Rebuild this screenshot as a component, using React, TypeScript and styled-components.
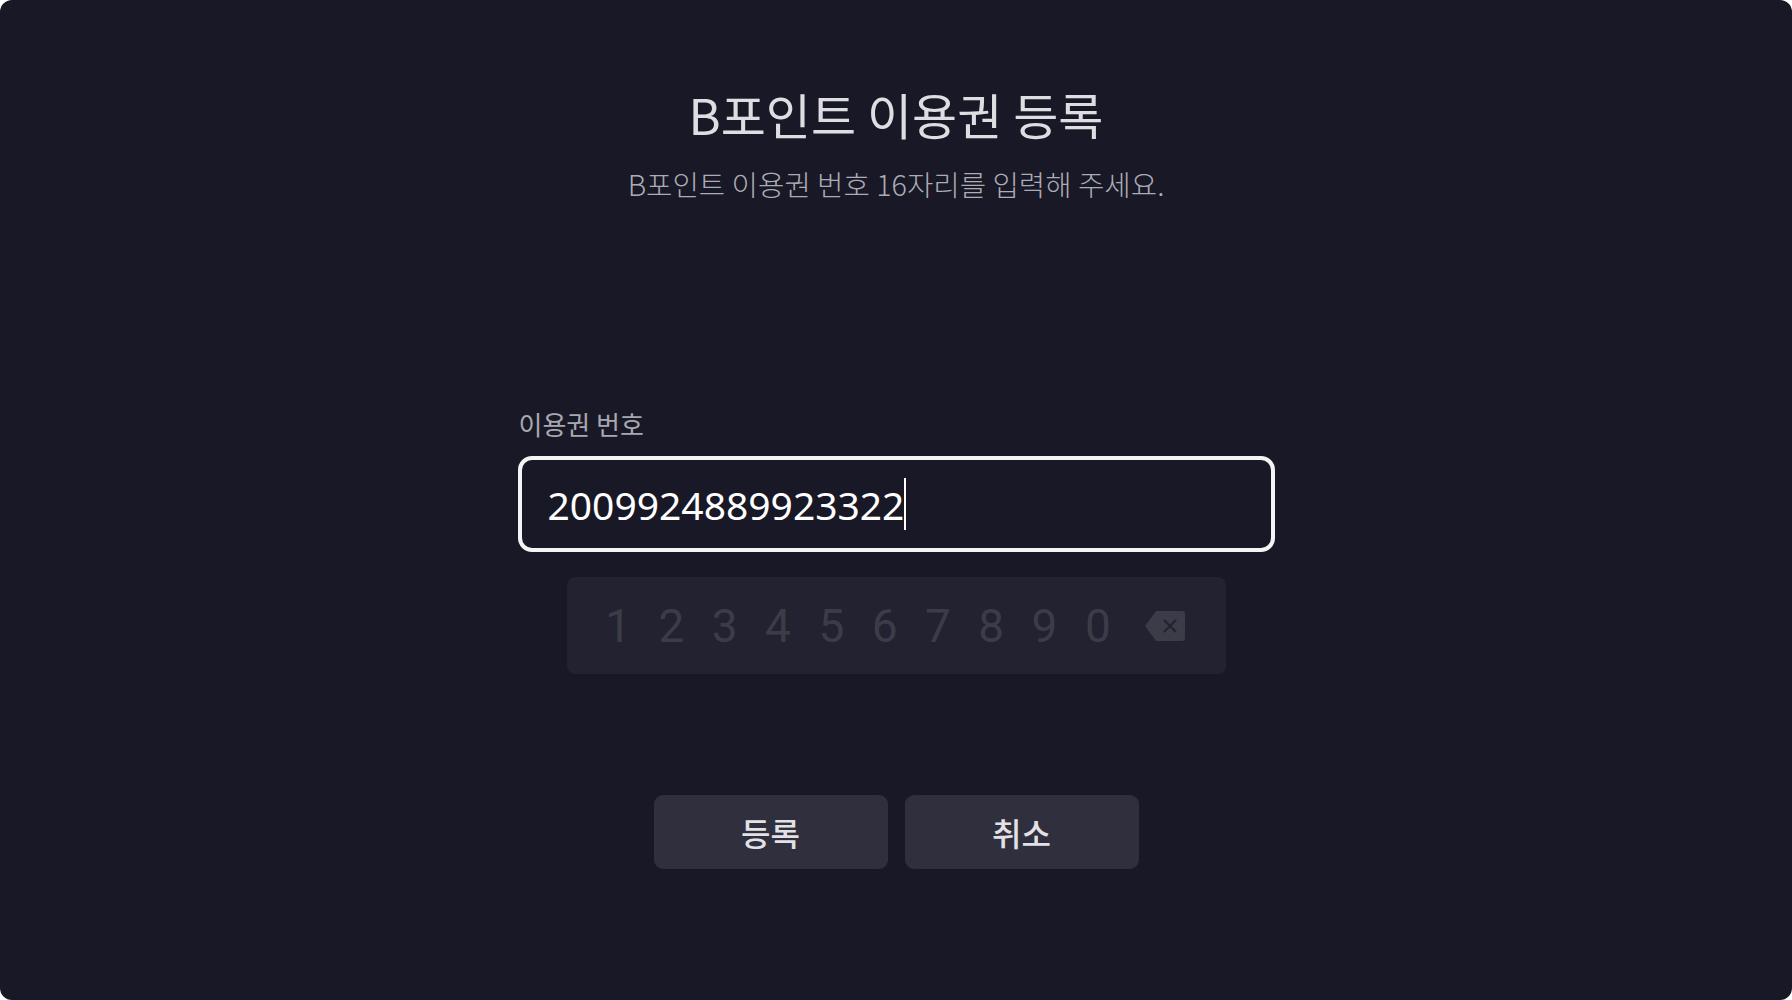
import styled, { createGlobalStyle } from "styled-components";

const GlobalStyle = createGlobalStyle`
  html, body {
    margin: 0;
    padding: 0;
    background: #ffffff;
  }
  * {
    box-sizing: border-box;
  }
`;

const Screen = styled.main`
  display: flex;
  flex-direction: column;
  align-items: center;
  width: 1792px;
  height: 1000px;
  padding-top: 85px;
  border-radius: 12px;
  background-color: #181826;
  font-family: "Noto Sans CJK KR", "Noto Sans", sans-serif;
  overflow: hidden;
`;

const Title = styled.h1`
  margin: 0;
  font-size: 49px;
  line-height: 58px;
  font-weight: 400;
  color: #dedee2;
`;

const Subtitle = styled.p`
  margin: 24px 0 0;
  font-size: 28.7px;
  line-height: 34px;
  font-weight: 300;
  color: #acacb4;
`;

const Form = styled.section`
  display: flex;
  flex-direction: column;
  width: 757px;
  margin-top: 208px;
`;

const Label = styled.label`
  font-size: 26px;
  line-height: 30px;
  font-weight: 400;
  color: #a8a8b0;
  padding-left: 1px;
`;

const InputBox = styled.div`
  display: flex;
  align-items: center;
  height: 96px;
  margin-top: 17px;
  padding: 0 26px;
  border: 4px solid #f4f4f6;
  border-radius: 14px;
`;

const Value = styled.span`
  font-family: "Noto Sans", "Noto Sans CJK KR", sans-serif;
  font-size: 39px;
  line-height: 39px;
  color: #ffffff;
`;

const Caret = styled.span`
  width: 2px;
  height: 52px;
  background: #ffffff;
`;

const Keypad = styled.div`
  display: flex;
  align-items: center;
  align-self: center;
  width: 659px;
  height: 97px;
  margin-top: 25px;
  padding: 0 20px 0 25px;
  border-radius: 8px;
  background-color: #222230;
`;

const Key = styled.span<{ $wide?: boolean }>`
  display: flex;
  align-items: center;
  justify-content: center;
  width: ${(p) => (p.$wide ? "auto" : "53.3px")};
  flex: ${(p) => (p.$wide ? 1 : "none")};
  font-family: Roboto, "Noto Sans", sans-serif;
  font-size: 46px;
  line-height: 1;
  color: #3c3c49;
`;

const ButtonRow = styled.div`
  display: flex;
  justify-content: center;
  gap: 17px;
  margin-top: 121px;
`;

const Button = styled.button`
  width: 234px;
  height: 74px;
  border: none;
  border-radius: 9px;
  background-color: #302f3d;
  font-family: "Noto Sans CJK KR", sans-serif;
  font-size: 32px;
  font-weight: 500;
  color: #e2e2e6;
  padding: 0;
`;

const BackspaceIcon = () => (
  <svg width="40" height="30" viewBox="0 0 40 30">
    <path
      d="M11 0 H37 A3 3 0 0 1 40 3 V27 A3 3 0 0 1 37 30 H11 L0 15 Z"
      fill="#3c3c49"
    />
    <path
      d="M19.5 9.5 L30.5 20.5 M30.5 9.5 L19.5 20.5"
      stroke="#222230"
      strokeWidth="2"
      strokeLinecap="round"
    />
  </svg>
);

const digits = ["1", "2", "3", "4", "5", "6", "7", "8", "9", "0"];

export default function App() {
  return (
    <>
      <GlobalStyle />
      <Screen>
        <Title>B포인트 이용권 등록</Title>
        <Subtitle>B포인트 이용권 번호 16자리를 입력해 주세요.</Subtitle>
        <Form>
          <Label>이용권 번호</Label>
          <InputBox>
            <Value>2009924889923322</Value>
            <Caret />
          </InputBox>
          <Keypad>
            {digits.map((d) => (
              <Key key={d}>{d}</Key>
            ))}
            <Key $wide>
              <BackspaceIcon />
            </Key>
          </Keypad>
          <ButtonRow>
            <Button>등록</Button>
            <Button>취소</Button>
          </ButtonRow>
        </Form>
      </Screen>
    </>
  );
}
